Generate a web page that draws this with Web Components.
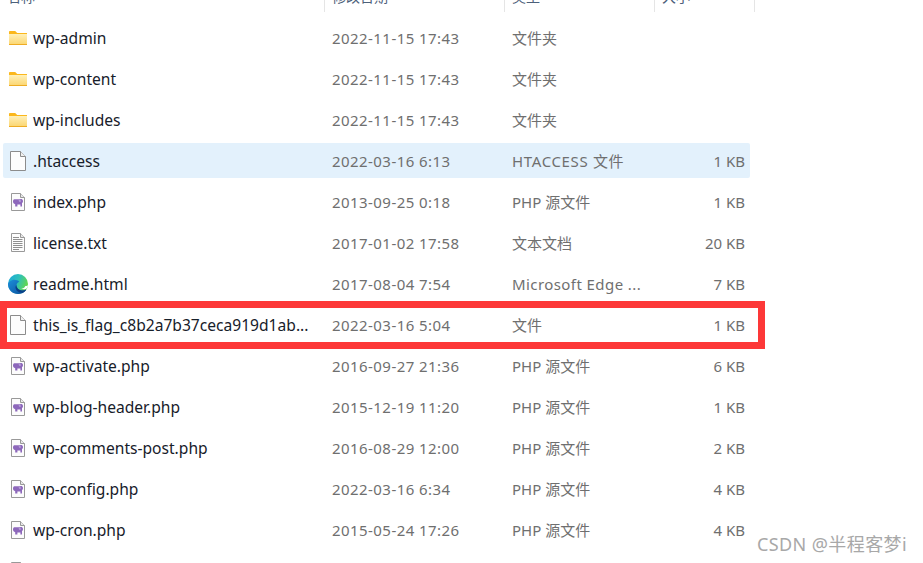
<!DOCTYPE html>
<html lang="zh">
<head>
<meta charset="utf-8">
<title>wordpress files</title>
<style>
    html, body {
        margin: 0;
        height: 100%;
        overflow: hidden;
        background: #fff;
        font-family: "Noto Sans", "Noto Sans CJK SC", sans-serif;
    }
</style>
</head>
<body>
<file-list>
    <file-row icon="folder" date="2022-11-15 17:43" type="文件夹">wp-admin</file-row>
    <file-row icon="folder" date="2022-11-15 17:43" type="文件夹">wp-content</file-row>
    <file-row icon="folder" date="2022-11-15 17:43" type="文件夹">wp-includes</file-row>
    <file-row icon="file" date="2022-03-16 6:13" type="HTACCESS 文件" type-spacing="0.65px" size="1 KB" selected>.htaccess</file-row>
    <file-row icon="php" date="2013-09-25 0:18" type="PHP 源文件" size="1 KB">index.php</file-row>
    <file-row icon="txt" date="2017-01-02 17:58" type="文本文档" size="20 KB">license.txt</file-row>
    <file-row icon="edge" date="2017-08-04 7:54" type="Microsoft Edge ..." type-spacing="0.42px" size="7 KB">readme.html</file-row>
    <file-row icon="file" date="2022-03-16 5:04" type="文件" size="1 KB">this_is_flag_c8b2a7b37ceca919d1ab...</file-row>
    <file-row icon="php" date="2016-09-27 21:36" type="PHP 源文件" size="6 KB">wp-activate.php</file-row>
    <file-row icon="php" date="2015-12-19 11:20" type="PHP 源文件" size="1 KB">wp-blog-header.php</file-row>
    <file-row icon="php" date="2016-08-29 12:00" type="PHP 源文件" size="2 KB">wp-comments-post.php</file-row>
    <file-row icon="php" date="2022-03-16 6:34" type="PHP 源文件" size="4 KB">wp-config.php</file-row>
    <file-row icon="php" date="2015-05-24 17:26" type="PHP 源文件" size="4 KB">wp-cron.php</file-row>
    <file-row icon="php"></file-row>
</file-list>
<red-box></red-box>
<water-mark>CSDN @半程客梦i</water-mark>

<script>
// rough elephant, same box as the 14x18 php page
const ELEPHANT = `
    <path fill="#8d68bb" d="M3.300 6.300h5c.6-.4 1.500-.5 2.200-.2 1 .4 1.500 1.200 1.500 2.200 0 .9-.4 1.500-1 1.800v3.400H9.400v-2H6.400v2H4.200v-2.300C2.800 10.900 2 10 2 8.500c0-1.200.5-1.900 1.300-2.200z"/>
    <path fill="#b59bd6" d="M7.700 6.700c.6-.4 1.500-.4 2 .1v2.100H8.600c-.7-.5-1-1.500-.9-2.200z"/>
`;

const ICONS = {
    folder: `<svg width="18" height="14" viewBox="0 0 18 14" style="margin-left:6px">
        <defs><linearGradient id="f" x1="0" y1="0" x2="0" y2="1">
            <stop offset="0" stop-color="#fff0b8"/><stop offset="1" stop-color="#fbd56e"/>
        </linearGradient></defs>
        <path fill="#fbb71c" d="M0 .8C0 .3.300 0 .8 0h5.400l2 2H18v2H0z"/>
        <rect y="3" width="18" height="11" fill="url(#f)"/>
        <rect y="13" width="18" height="1" fill="#eeac24"/>
    </svg>`,
    file: `<svg width="16" height="20" viewBox="0 0 16 20" style="margin-left:7px">
        <path fill="#fdfdfd" stroke="#8c8c8c" d="M.5.500h10l5 5v14H.5z"/>
        <path fill="#f0f0f0" stroke="#8c8c8c" d="M10.500.500v5h5"/>
    </svg>`,
    php: `<svg width="14" height="18" viewBox="0 0 14 18" style="margin-left:8px">
        <path fill="#fcfcfc" stroke="#999" d="M.5.500h9l4 4v13H.5z"/>
        <path fill="#e8e8e8" stroke="#999" d="M9.500.500v4h4"/>
        ${ELEPHANT}
    </svg>`,
    txt: `<svg width="14" height="19" viewBox="0 0 14 19" style="margin-left:8px">
        <path fill="#fcfcfc" stroke="#999" d="M.5.500h9l4 4v14H.5z"/>
        <path fill="#e8e8e8" stroke="#999" d="M9.500.500v4h4"/>
        <path stroke="#8f8f8f" d="M2 4.500h6M2 6.500h9.500M2 8.500h9.500M2 10.500h9.500M2 12.500h9.500M2 14.500h9.500M2 16.500h6"/>
    </svg>`,
    edge: `<svg width="20" height="20" viewBox="0 0 20 20" style="margin-left:5px">
        <defs>
            <linearGradient id="e1" x1="0" y1="0" x2="1" y2=".4">
                <stop offset="0" stop-color="#1aa6dd"/><stop offset=".55" stop-color="#2fc1b8"/><stop offset="1" stop-color="#63d64f"/>
            </linearGradient>
            <linearGradient id="e2" x1="0" y1="0" x2="1" y2="1">
                <stop offset="0" stop-color="#1c8ed8"/><stop offset="1" stop-color="#0b4f9e"/>
            </linearGradient>
        </defs>
        <circle cx="10" cy="10" r="10" fill="url(#e1)"/>
        <path fill="url(#e2)" d="M0 10c0 6 4.500 10 10 10 3.500 0 6.500-1.500 8.400-4.500-1.800 1-3.800 1.300-5.500.8-2.700-.7-4.700-3-4.400-5.300.2-1.700 1.300-2.800 2.800-3.300C9.500 6 6.500 5.300 4 6.200 1.800 7 .3 8.300 0 10z"/>
        <path fill="#fff" d="M19.900 11.600c-.3 1.800-1 2.900-2.200 3.500-1.500.4-3.500.3-4.800-.5 1.300.2 4-.5 4.200-2.300.5-.1 1.800-.3 2.800-.7z"/>
        <path fill="#0a3f86" d="M8.500 11c-.3 2.300 1.700 4.600 4.400 5.300 1.700.5 3.700.2 5.500-.8-.8 1.300-1.900 2.400-3.200 3.100-3.200.8-6.800-.9-7.600-4.300-.2-1.100-.1-2.300.9-3.300z"/>
    </svg>`
};

class FileIcon extends HTMLElement {
    constructor() {
        super();
        this.attachShadow({ mode: 'open' });
    }

    connectedCallback() {
        this.shadowRoot.innerHTML = `
            <style>
                :host { display: flex; align-items: center; }
                svg { display: block; }
            </style>
            ${ICONS[this.getAttribute('kind')] || ''}
        `;
    }
}

class ListHeader extends HTMLElement {
    constructor() {
        super();
        this.attachShadow({ mode: 'open' });
        this.shadowRoot.innerHTML = `
            <style>
                :host {
                    display: grid;
                    grid-template-columns: 325px 180px 150px 100px;
                    height: 12px;
                    overflow: hidden;
                    width: 755px;
                }
                div {
                    border-right: 1px solid #e5e5e5;
                    box-sizing: border-box;
                    padding-left: 7px;
                    font-size: 14px;
                    line-height: 12px;
                    color: #4c607a;
                    margin-top: -13px;
                    height: 25px;
                    padding-top: 4px;
                }
                div:first-child { padding-left: 25px; }
            </style>
            <div>名称</div><div>修改日期</div><div>类型</div><div>大小</div>
        `;
    }
}

class FileRow extends HTMLElement {
    constructor() {
        super();
        this.attachShadow({ mode: 'open' });
    }

    connectedCallback() {
        const date = this.getAttribute('date') || '';
        const type = this.getAttribute('type') || '';
        const size = this.getAttribute('size') || '';
        const icon = this.getAttribute('icon');
        const typeSpacing = this.getAttribute('type-spacing') || '0';

        this.shadowRoot.innerHTML = `
            <style>
                :host {
                    display: grid;
                    grid-template-columns: 30px 299px 180px 1fr auto;
                    align-items: center;
                    height: 35px;
                    width: 747px;
                    margin-left: 3px;
                    padding-right: 5px;
                    box-sizing: border-box;
                    border-radius: 2px;
                    font-size: 15px;
                    color: #6f6f6f;
                    white-space: nowrap;
                }
                :host([selected]) { background: #e3f1fc; }
                .name { color: #17202a; font-size: 15.6px; }
                .date { letter-spacing: .44px; }
                .type { letter-spacing: ${typeSpacing}; }
            </style>
            <file-icon kind="${icon}"></file-icon>
            <span class="name"><slot></slot></span>
            <span class="date">${date}</span>
            <span class="type">${type}</span>
            <span>${size}</span>
        `;
    }
}

class FileList extends HTMLElement {
    constructor() {
        super();
        this.attachShadow({ mode: 'open' });
        this.shadowRoot.innerHTML = `
            <style>
                :host { display: block; }
                .rows {
                    display: flex;
                    flex-direction: column;
                    gap: 6px;
                    padding-top: 8px;
                }
            </style>
            <list-header></list-header>
            <div class="rows"><slot></slot></div>
        `;
    }
}

class RedBox extends HTMLElement {
    constructor() {
        super();
        this.attachShadow({ mode: 'open' });
        this.shadowRoot.innerHTML = `
            <style>
                :host {
                    position: absolute;
                    left: 0;
                    top: 301px;
                    width: 765px;
                    height: 48px;
                    box-sizing: border-box;
                    border: 7px solid #fd3838;
                }
            </style>
        `;
    }
}

class WaterMark extends HTMLElement {
    constructor() {
        super();
        this.attachShadow({ mode: 'open' });
        this.shadowRoot.innerHTML = `
            <style>
                :host {
                    position: absolute;
                    left: 757px;
                    top: 532px;
                    font-size: 18px;
                    line-height: 24px;
                    letter-spacing: .4px;
                    color: #a8a8a8;
                    white-space: nowrap;
                }
            </style>
            <slot></slot>
        `;
    }
}

customElements.define('file-icon', FileIcon);
customElements.define('list-header', ListHeader);
customElements.define('file-row', FileRow);
customElements.define('file-list', FileList);
customElements.define('red-box', RedBox);
customElements.define('water-mark', WaterMark);
</script>
</body>
</html>
